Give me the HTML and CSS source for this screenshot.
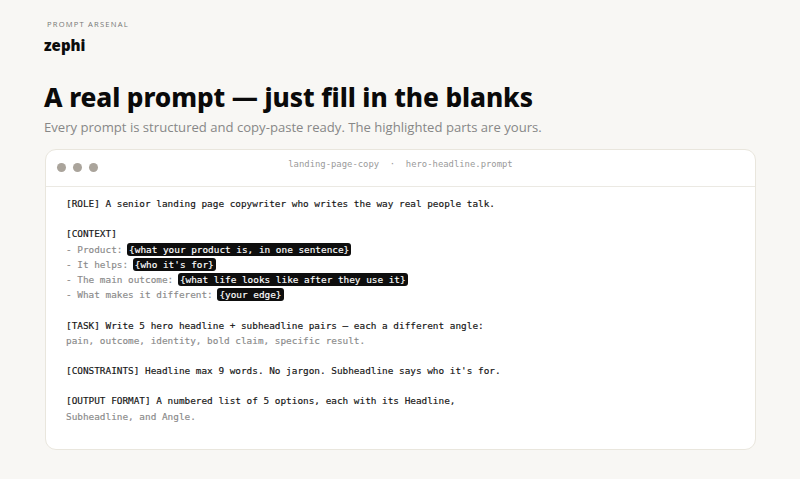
FILE: index.html
```html
<!DOCTYPE html>
<html lang="en">
<head>
    <meta charset="UTF-8">
    <meta name="viewport" content="width=device-width, initial-scale=1.0">
    <title>zephi — Prompt Arsenal</title>
    <link rel="stylesheet" href="styles.css">
</head>
<body>
    <header class="brand">
        <div class="eyebrow">Prompt Arsenal</div>
        <div class="logo">zephi</div>
    </header>

    <section class="intro">
        <h1>A real prompt — just fill in the blanks</h1>
        <p class="lead">Every prompt is structured and copy-paste ready. The highlighted parts are yours.</p>
    </section>

    <div class="prompt-card">
        <div class="prompt-bar">
            <div class="dots">
                <span class="dot"></span>
                <span class="dot"></span>
                <span class="dot"></span>
            </div>
            <div class="prompt-title">landing-page-copy &nbsp;·&nbsp; hero-headline.prompt</div>
        </div>
        <div class="prompt-body">
            <div class="line">[ROLE] A senior landing page copywriter who writes the way real people talk.</div>
            <div class="line blank"></div>
            <div class="line">[CONTEXT]</div>
            <div class="line muted">- Product: <span class="slot">{what your product is, in one sentence}</span></div>
            <div class="line muted">- It helps: <span class="slot">{who it's for}</span></div>
            <div class="line muted">- The main outcome: <span class="slot">{what life looks like after they use it}</span></div>
            <div class="line muted">- What makes it different: <span class="slot">{your edge}</span></div>
            <div class="line blank"></div>
            <div class="line">[TASK] Write 5 hero headline + subheadline pairs — each a different angle:</div>
            <div class="line muted">pain, outcome, identity, bold claim, specific result.</div>
            <div class="line blank"></div>
            <div class="line">[CONSTRAINTS] Headline max 9 words. No jargon. Subheadline says who it's for.</div>
            <div class="line blank"></div>
            <div class="line">[OUTPUT FORMAT] A numbered list of 5 options, each with its Headline,</div>
            <div class="line muted">Subheadline, and Angle.</div>
        </div>
    </div>
</body>
</html>
```

FILE: styles.css
```css
body {
    margin: 0;
    padding: 18px 44px 0 44px;
    background-color: #f8f7f4;
    color: #111;
    font-family: 'Open Sans', 'Noto Sans', Arial, sans-serif;
}
.brand {
    margin-bottom: 26px;
}
.eyebrow {
    font-size: 7.6px;
    letter-spacing: 1.2px;
    text-transform: uppercase;
    color: #777;
    padding-left: 3px;
    line-height: 12px;
}
.logo {
    margin-top: 6px;
    font-size: 15px;
    font-weight: 800;
    color: #0c0c0c;
    line-height: 18px;
}
h1 {
    margin: 0;
    font-family: 'Noto Sans', 'Open Sans', sans-serif;
    font-size: 26.2px;
    font-weight: 800;
    letter-spacing: -0.1px;
    line-height: 34px;
    color: #0a0a0a;
}
.lead {
    margin: 3px 0 12px 0;
    font-size: 13.1px;
    color: #878787;
    line-height: 20px;
}
.prompt-card {
    width: 711px;
    margin-left: 1px;
    background: #fff;
    border: 1px solid #e9e6dd;
    border-radius: 11px;
    overflow: hidden;
    height: 301px;
    box-sizing: border-box;
}
.prompt-bar {
    position: relative;
    height: 36px;
    border-bottom: 1px solid #ebe9e3;
    display: flex;
    align-items: center;
    justify-content: center;
}
.dots {
    position: absolute;
    left: 11px;
    top: 13px;
    display: flex;
    gap: 7px;
}
.dot {
    width: 9px;
    height: 9px;
    border-radius: 50%;
    background: #aaa49b;
}
.prompt-title {
    font-family: 'DejaVu Sans Mono', 'Liberation Mono', monospace;
    font-size: 8.9px;
    color: #9a9a9a;
    margin-top: -8px;
}
.prompt-body {
    padding: 9px 20px 0 20px;
    font-family: 'DejaVu Sans Mono', 'Liberation Mono', monospace;
    font-size: 9.4px;
    line-height: 15.2px;
    color: #141414;
    -webkit-text-stroke: 0.15px currentColor;
}
.line {
    white-space: pre;
    height: 15.2px;
}
.line.muted {
    color: #8a8a8a;
}
.slot {
    background: #0e0e0e;
    color: #fff;
    border-radius: 3px;
    padding: 1px 2px;
    margin: 0 -1px;
}
```
